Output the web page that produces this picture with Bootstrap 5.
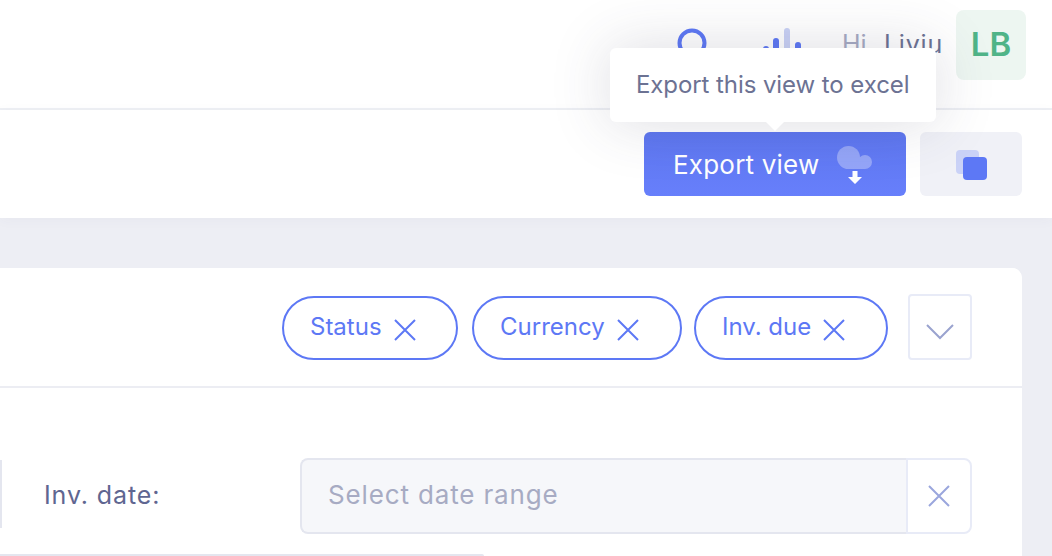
<!DOCTYPE html>
<html lang="en">
<head>
<meta charset="utf-8">
<title>Export view</title>
<link href="https://cdn.jsdelivr.net/npm/bootstrap@5.3.0/dist/css/bootstrap.min.css" rel="stylesheet">
<style>
html,body{height:100%;overflow:hidden}
body{background:#edeef4;font-family:"Inter","Noto Sans",sans-serif;color:#646c9a;width:1052px}
.top-strip{height:110px;background:#fff;border-bottom:2px solid #eef0f4;padding:10px 26px 0 0}
.ico-search{margin-right:56px;margin-top:18px}
.ico-bars{margin-right:41px;margin-top:18px}
.hi-text{font-size:25px;line-height:1;color:#a7abc3;width:42px}
.name-text{font-size:25px;line-height:1;color:#6c7293;letter-spacing:.8px}
.user-text{margin-right:13px;margin-top:22px}
.avatar-box{width:70px;height:70px;border-radius:8px;background:#edf6f1;color:#50b488;font-size:33px;font-weight:600}
.sub-strip{height:108px;background:#fff;padding-right:30px;padding-top:22px;box-shadow:0 2px 12px rgba(80,80,120,.04)}
.export-wrap{margin-right:14px}
.btn-export{width:262px;height:64px;border-radius:6px;border:0;background:linear-gradient(#5e77f0,#677ffb);color:#fff;font-size:26px;letter-spacing:.2px;padding:0 0 0 29px;gap:18px}
.btn-export:hover{background:#5e77f0;color:#fff}
.btn-copy{width:102px;height:64px;border-radius:6px;background:#f0f1f7;border:0;padding:0}
.tip-box{left:-34px;bottom:74px;width:326px;height:74px;background:#fff;border-radius:6px;font-size:24px;letter-spacing:-.08px;color:#6c7293;padding-left:26px;box-shadow:0 0 60px rgba(60,60,90,.18);white-space:nowrap}
.tip-arrow{left:156px;bottom:-9px;width:0;height:0;border-left:9px solid transparent;border-right:9px solid transparent;border-top:9px solid #fff}
.main-area{padding:50px 30px 0 0}
.panel-card{border:0;border-radius:0 10px 0 0;background:#fff}
.panel-head{height:120px;background:#fff;border:0;border-bottom:2px solid #ecedf3;padding:2px 50px 0 0;border-radius:0 10px 0 0!important}
.chip-item{height:64px;border:2px solid #5d78f5;border-radius:32px;color:#5d78f5;font-size:24px;padding:0 0 3px 26px;background:#fff;gap:12px}
.chip-item svg{margin-top:6px}
.chip-status{width:176px;margin-right:14px}
.chip-curr{width:210px;margin-right:12px}
.chip-due{width:194px;margin-right:20px}
.chev-btn{width:64px;height:66px;border:2px solid #e8ebf7;border-radius:4px;background:#fff;padding:0;margin-top:-2px}
.chev-btn svg{margin-top:10px}
.panel-body{padding:70px 50px 0 0}
.stub-left{width:2px;height:68px;background:#e4e6ef;margin-top:2px}
.date-label{font-size:25px;letter-spacing:.9px;color:#5f6691;width:256px;margin-left:42px;height:76px;margin-bottom:0}
.date-group{width:672px;height:76px}
.date-input.form-control{background:#f6f7fa;border:2px solid #e4e6ef;border-right:0;border-radius:8px 0 0 8px;font-size:26px;letter-spacing:.85px;color:#a7abc3;padding:0 26px 3px;height:76px;box-shadow:none}
.date-input.form-control::placeholder{color:#a7abc3;opacity:1}
.clear-btn{width:66px;height:76px;background:#fff;border:2px solid #e8ebf7;border-radius:0 8px 8px 0!important;padding:0}
.stub-bottom{width:484px;height:2px;background:#e4e6ef;margin-top:20px;border-radius:0 2px 0 0}
</style>
</head>
<body>
<header class="top-strip d-flex justify-content-end align-items-start">
  <svg class="ico-search" width="30" height="30" viewBox="0 0 30 30" fill="none"><circle cx="15" cy="15" r="12.500" stroke="#5d78f5" stroke-width="4"/></svg>
  <svg class="ico-bars" width="38" height="34" viewBox="0 0 38 34"><rect x="21" y="0" width="6" height="34" rx="3" fill="#c9d1f5"/><rect x="10" y="10" width="6" height="24" rx="3" fill="#5d78f5"/><rect x="32" y="14" width="6" height="20" rx="3" fill="#5d78f5"/><rect x="0" y="18" width="6" height="16" rx="3" fill="#5d78f5"/></svg>
  <div class="user-text d-flex"><span class="hi-text">Hi,</span><span class="name-text">Liviu</span></div>
  <div class="avatar-box d-flex align-items-center justify-content-center">LB</div>
</header>
<section class="sub-strip d-flex justify-content-end align-items-start">
  <div class="export-wrap position-relative">
    <div class="tip-box position-absolute d-flex align-items-center">Export this view to excel<span class="tip-arrow position-absolute"></span></div>
    <button type="button" class="btn btn-export d-flex align-items-center">
      <span>Export view</span>
      <svg width="36" height="42" viewBox="0 0 36 42"><g fill="#fff" opacity=".32"><circle cx="11.500" cy="14.500" r="11.500"/><circle cx="28" cy="19" r="7"/><rect x="11" y="14" width="17" height="12"/></g><path d="M15.500 28h5v6h4.500l-7 7-7-7h4.500z" fill="#fff"/></svg>
    </button>
  </div>
  <button type="button" class="btn btn-copy d-flex align-items-center justify-content-center">
    <svg width="32" height="32" viewBox="0 0 32 32"><rect x="1" y="2" width="23" height="24" rx="4" fill="#cad2f7"/><rect x="8" y="9" width="24" height="23" rx="4" fill="#5d78f5"/></svg>
  </button>
</section>
<main class="main-area">
  <div class="card panel-card">
    <div class="card-header panel-head d-flex justify-content-end align-items-center">
      <button type="button" class="btn chip-item chip-status d-flex align-items-center">Status
        <svg width="22" height="22" viewBox="0 0 22 22"><path d="M1 1l20 20M21 1L1 21" stroke="#5d78f5" stroke-width="2"/></svg></button>
      <button type="button" class="btn chip-item chip-curr d-flex align-items-center">Currency
        <svg width="22" height="22" viewBox="0 0 22 22"><path d="M1 1l20 20M21 1L1 21" stroke="#5d78f5" stroke-width="2"/></svg></button>
      <button type="button" class="btn chip-item chip-due d-flex align-items-center">Inv. due
        <svg width="22" height="22" viewBox="0 0 22 22"><path d="M1 1l20 20M21 1L1 21" stroke="#5d78f5" stroke-width="2"/></svg></button>
      <button type="button" class="btn chev-btn d-flex align-items-center justify-content-center">
        <svg width="28" height="16" viewBox="0 0 28 16" fill="none"><path d="M1 1l13 13L27 1" stroke="#9aa3cf" stroke-width="2"/></svg>
      </button>
    </div>
    <div class="card-body panel-body">
      <div class="d-flex align-items-start">
        <div class="stub-left"></div>
        <label class="date-label d-flex align-items-center" for="dateRange">Inv. date:</label>
        <div class="input-group date-group">
          <input id="dateRange" type="text" class="form-control date-input" placeholder="Select date range">
          <button type="button" class="btn clear-btn d-flex align-items-center justify-content-center">
            <svg width="22" height="22" viewBox="0 0 22 22"><path d="M1 1l20 20M21 1L1 21" stroke="#9aa6dd" stroke-width="2"/></svg>
          </button>
        </div>
      </div>
      <div class="stub-bottom"></div>
    </div>
  </div>
</main>
<script src="https://cdn.jsdelivr.net/npm/bootstrap@5.3.0/dist/js/bootstrap.bundle.min.js"></script>
</body>
</html>
